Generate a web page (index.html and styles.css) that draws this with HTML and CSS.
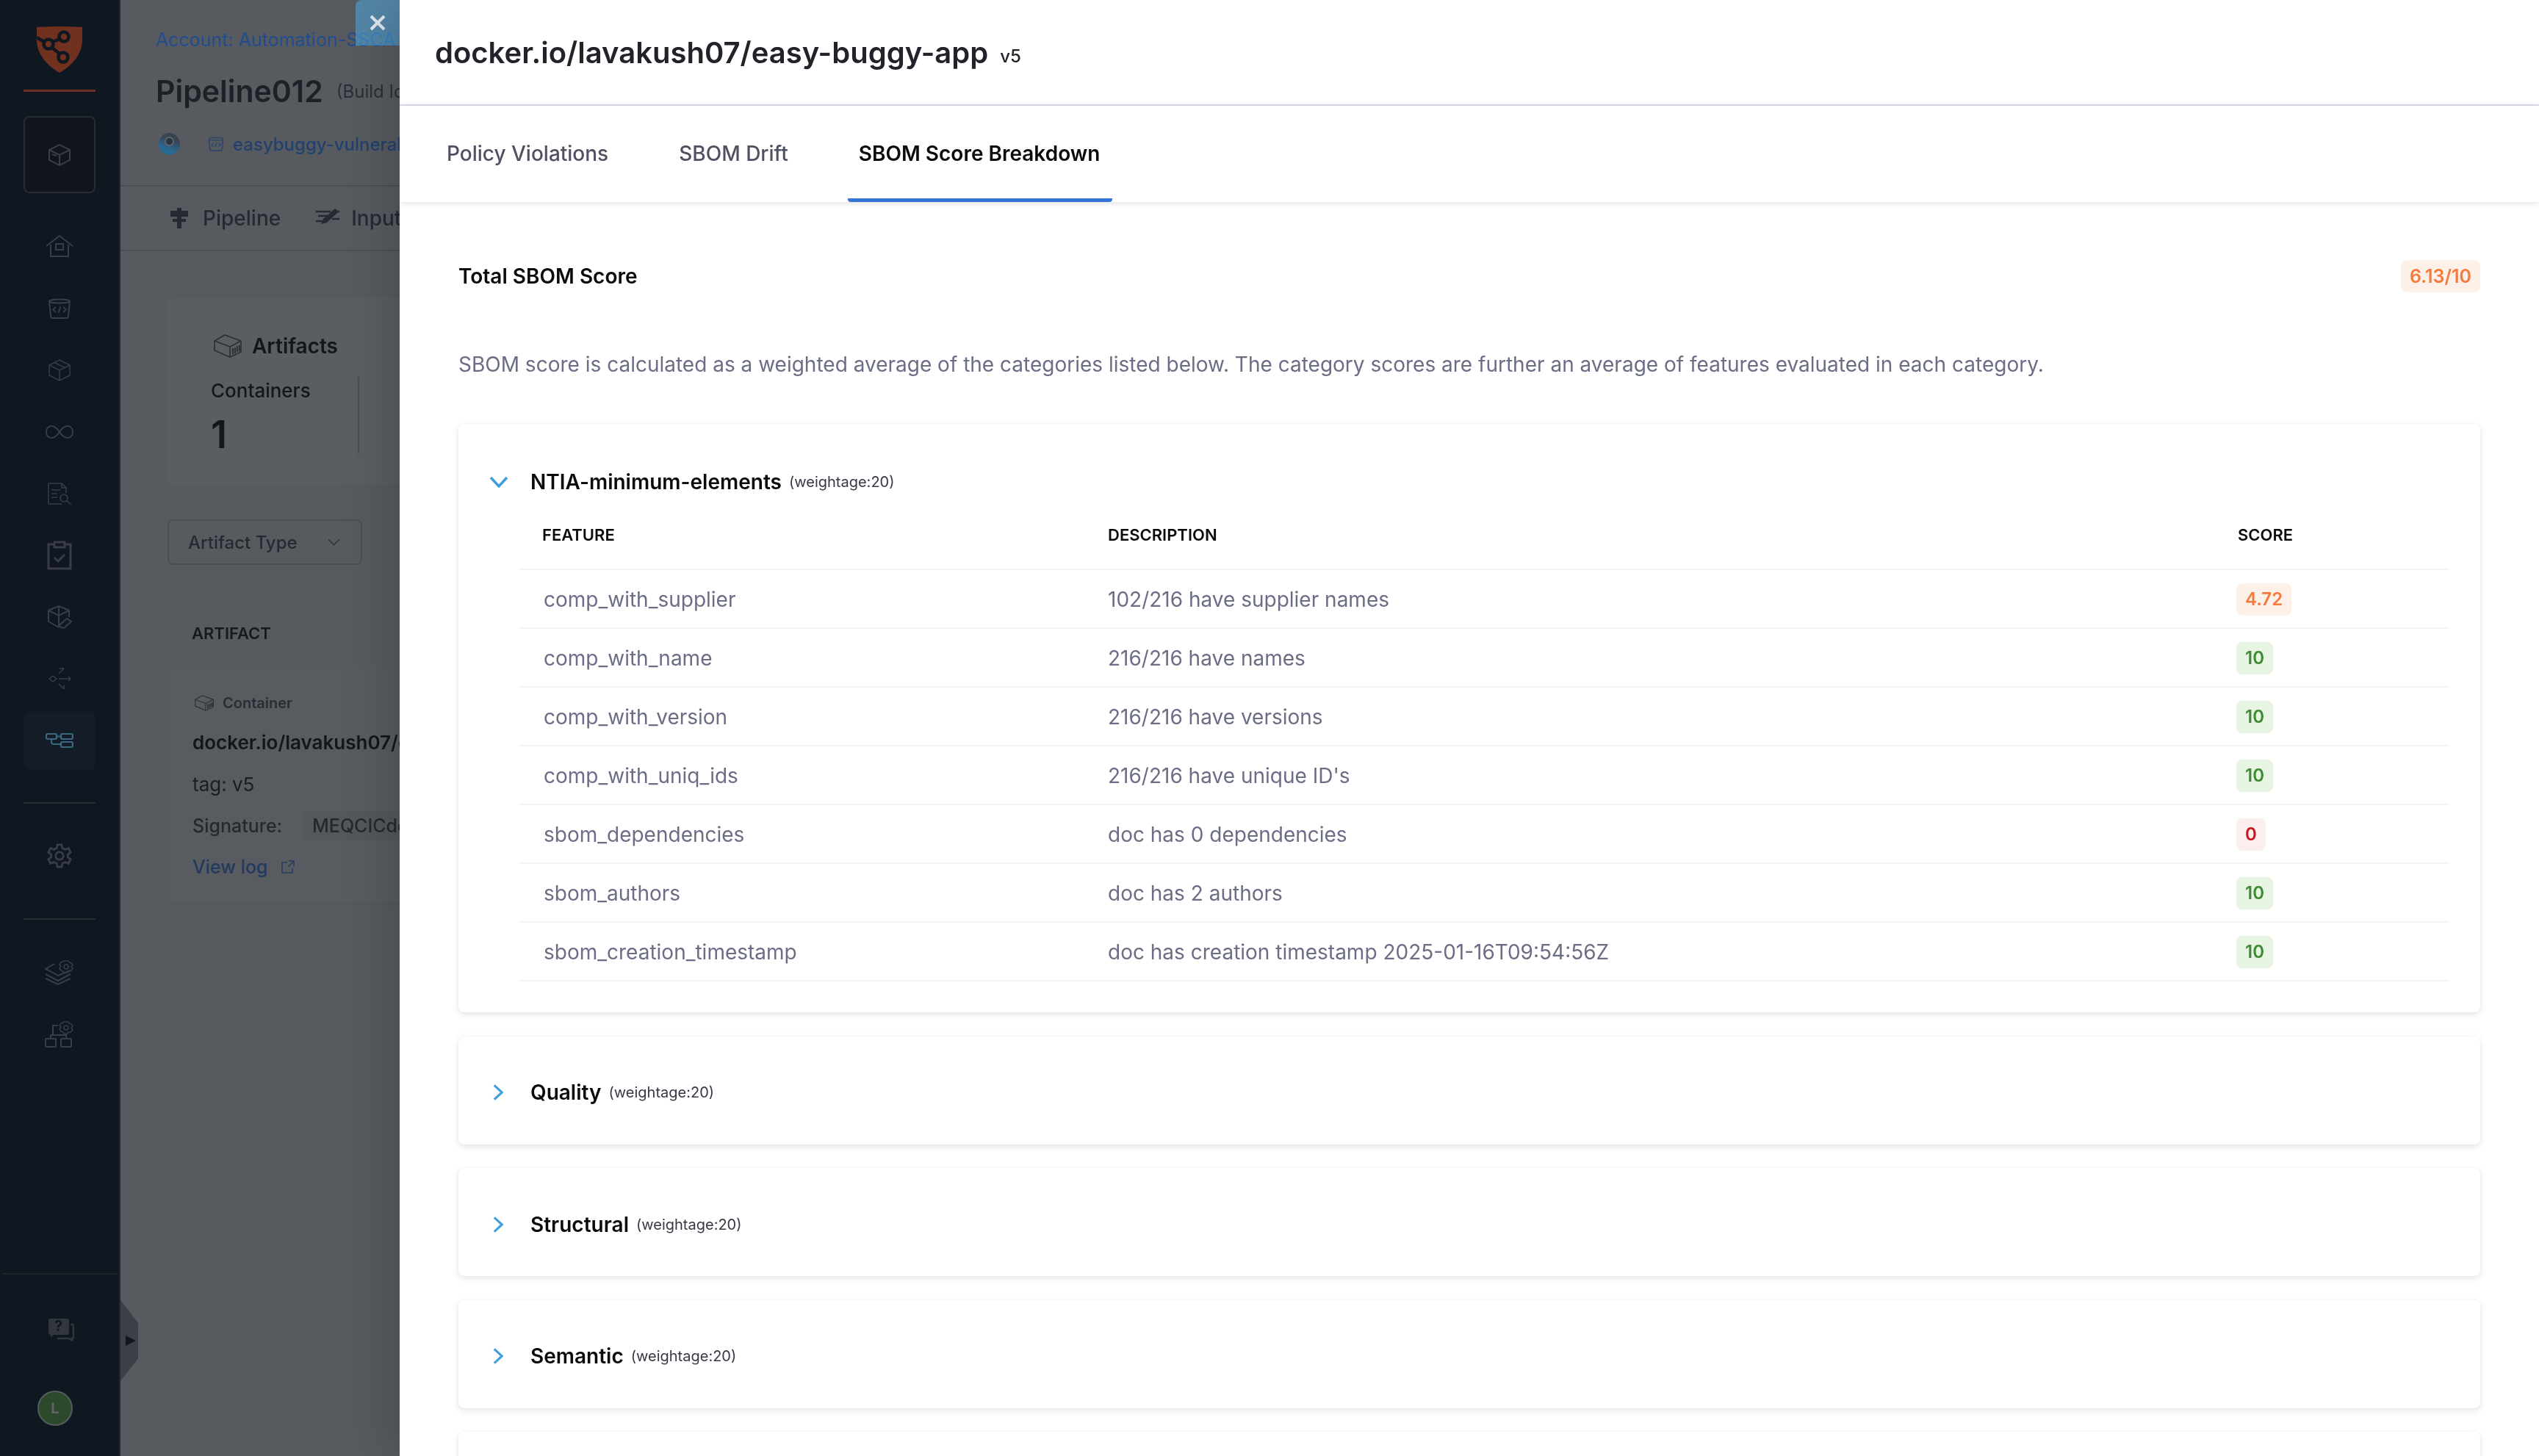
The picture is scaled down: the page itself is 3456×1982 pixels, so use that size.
FILE: index.html
```html
<!DOCTYPE html>
<html lang="en">
<head>
<meta charset="utf-8">
<title>SBOM Score Breakdown</title>
<link rel="stylesheet" href="styles.css">
</head>
<body>
<svg class="defs" width="0" height="0" aria-hidden="true">
  <symbol id="container" viewBox="0 0 38 32">
    <path d="M1 9 15 1l22 8v15l-15 7L1 22z" fill="none" stroke="currentColor" stroke-width="1.6"/>
    <path d="M1 9l21 8 15-8M22 17v14" fill="none" stroke="currentColor" stroke-width="1.6"/>
    <path d="M26 19v8M29 18v8M32 16v8M35 15v8" stroke="currentColor" stroke-width="2"/>
  </symbol>
  <symbol id="bucket" viewBox="0 0 32 28">
    <ellipse cx="16" cy="4" rx="14" ry="2.6" fill="none" stroke="currentColor" stroke-width="2"/>
    <path d="M2 4l2 20q0 3 3 3h18q3 0 3-3l2-20" fill="none" stroke="currentColor" stroke-width="2"/>
    <path d="M11 12l-4 3.500 4 3.500M21 12l4 3.500-4 3.500M17.500 11l-3 9" fill="none" stroke="currentColor" stroke-width="1.800"/>
  </symbol>
</svg>

<div class="page">
  <aside class="sidebar">
    <div class="logo-wrap">
      <svg class="logo" viewBox="0 0 62 63">
        <path d="M0 1Q31-1 62 1V18C62 40 45 55 31 63 17 55 0 40 0 18Z" fill="#70321f"/>
        <g fill="none" stroke="#0f1721" stroke-width="4.500">
          <circle cx="37" cy="14" r="6.500"/>
          <circle cx="16" cy="24" r="6.500"/>
          <circle cx="36" cy="42" r="6.500"/>
          <path d="M0 15 10 21M22 21l9-4M21 29l10 8"/>
        </g>
      </svg>
    </div>
    <div class="module-box">
      <svg class="ico-32" viewBox="0 0 32 32"><path d="M16 2 30 9v14l-14 7-14-7V9zM2 9l14 7 14-7M16 16v14M6 15l6 2" class="s"/></svg>
    </div>
    <nav class="nav">
      <div class="nav-item"><svg class="ico-38" viewBox="0 0 38 32"><path d="M1 15 19 1l18 14M7 13v16h24V13M14 12h10v8H14z" class="s"/></svg></div>
      <div class="nav-item"><svg class="ico-32 tone"><use href="#bucket"/></svg></div>
      <div class="nav-item"><svg class="ico-32" viewBox="0 0 32 32"><path d="M16 2 30 9v14l-14 7-14-7V9zM2 9l14 7 14-7M16 16v14M9 5.500l14 7" class="s thin"/></svg></div>
      <div class="nav-item"><svg class="ico-38" viewBox="0 0 38 18"><path d="M19 9C15 3 11 1 8 1 4 1 1 4 1 9s3 8 7 8c3 0 7-2 11-8 4-6 8-8 11-8 4 0 7 3 7 8s-3 8-7 8c-3 0-7-2-11-8z" class="s"/></svg></div>
      <div class="nav-item"><svg class="ico-34" viewBox="0 0 34 32"><path d="M20 30H2V2h18l6 6v7M20 2v6h6M6 11h12M6 16h8M6 21h8" class="s thin"/><circle cx="23" cy="22" r="5" class="s thin"/><path d="M27 26l6 5" class="s thin"/></svg></div>
      <div class="nav-item"><svg class="ico-34 clip" viewBox="0 0 34 40"><path d="M10 5H2v33h30V5h-8M10 2h14v7H10zM10 23l5 5 9-9" class="s bold"/></svg></div>
      <div class="nav-item"><svg class="ico-34" viewBox="0 0 34 34"><path d="M16 2 30 8v9M16 2 2 8v15l14 8M2 8l14 7 14-7M16 15v16M16 2v13" class="s"/><path d="M18 27l9-8 6 4-9 8q-3 2-6-1t0-3z" class="s"/></svg></div>
      <div class="nav-item"><svg class="ico-32" viewBox="0 0 32 32"><path d="M7 12l5 4-5 4-5-4zM15 9l7-7M22 2h-6M15 16h16M31 16l-3-3M31 16l-3 3M15 23l7 7M22 30v-5" class="s thin"/></svg></div>
      <div class="nav-item"><div class="nav-active"><svg class="ico-38 active-ico" viewBox="0 0 38 20"><rect x="1" y="1" width="14" height="7" rx="2" class="s"/><rect x="21" y="1" width="16" height="7" rx="2" class="s"/><rect x="21" y="12" width="16" height="7" rx="2" class="s"/><path d="M15 4.500h6M8 8v4q0 3 3 3h10" class="s"/></svg></div></div>
    </nav>
    <div class="side-rule first"></div>
    <div class="gear-item">
      <svg class="ico-34" viewBox="0 0 34 36"><path d="M14 2h6l1 5 4 2 5-2 3 6-4 3v4l4 3-3 6-5-2-4 2-1 5h-6l-1-5-4-2-5 2-3-6 4-3v-4L1 13l3-6 5 2 4-2z" class="s bold"/><circle cx="17" cy="18" r="5.500" class="s bold"/></svg>
    </div>
    <div class="side-rule"></div>
    <div class="admin-item one">
      <svg class="ico-40" viewBox="0 0 40 34"><path d="M13 5 1 12l17 9 17-7M1 19l17 9 17-9M1 25l17 8 17-8" class="s"/><path d="M26 1h6l1 2 3 1 2 3-2 2 2 3-3 3-3 0-1 2h-5l-1-2-3-1-2-3 2-3-2-2 2-3 3-1z" class="s thin"/><circle cx="29" cy="9" r="3" class="s thin"/></svg>
    </div>
    <div class="admin-item">
      <svg class="ico-40" viewBox="0 0 40 36"><rect x="1" y="24" width="14" height="11" rx="1" class="s"/><rect x="22" y="24" width="14" height="11" rx="1" class="s"/><path d="M8 24v-5h21v5M11 19V6h7" class="s"/><path d="M26 1h6l1 2 3 1 2 3-2 2 2 3-3 3h-3l-1 2h-5l-1-2-3-1-2-3 2-3-2-2 2-3 3-1z" class="s thin"/><circle cx="29" cy="9" r="3" class="s thin"/></svg>
    </div>
    <div class="side-foot">
      <div class="help">
        <svg class="ico-help" viewBox="0 0 36 32"><path d="M3 1h23q3 0 3 3v16q0 3-3 3H8l-4 4v-4q-3 0-3-3V4q0-3 2-3z" fill="#33363f"/><path d="M31 9h2q2 0 2 2v15q0 2-2 2v3l-4-3H13" fill="none" stroke="#33363f" stroke-width="2.500"/></svg>
        <span class="help-q">?</span>
      </div>
      <div class="avatar">L</div>
    </div>
  </aside>

  <main class="main">
    <header class="run-head">
      <div class="crumb">Account: Automation-SSCA</div>
      <div class="run-title"><span class="run-name">Pipeline012</span><span class="run-id">(Build Id</span></div>
      <div class="run-meta">
        <span class="meta-disc"><span class="meta-hole"></span></span>
        <svg class="meta-bucket"><use href="#bucket"/></svg>
        <span class="meta-link">easybuggy-vulneral</span>
      </div>
    </header>
    <div class="run-tabs">
      <span class="run-tab">
        <svg class="ico-pipe" viewBox="0 0 24 28"><path d="M9 0h6v4h9v8H15v3h6v4h-6v9H9v-9H3v-4h6v-3H0V4h9z" fill="#262932"/></svg>
        Pipeline
      </span>
      <span class="run-tab">
        <svg class="ico-input" viewBox="0 0 32 26"><path d="M0 4h20M3 10h14M0 17h10M22 14h10M24 4h8" stroke="#262932" stroke-width="2.500" fill="none"/><path d="M26 0l5 4-16 15-8 2 3-7z" fill="#262932"/></svg>
        Input
      </span>
    </div>
    <section class="run-body">
      <div class="stat-card">
        <div class="stat-head"><svg class="stat-ico"><use href="#container"/></svg><span>Artifacts</span></div>
        <div class="stat-col">
          <div class="stat-label">Containers</div>
          <div class="stat-value">1</div>
        </div>
      </div>
      <div class="filter"><span>Artifact Type</span><svg class="filter-chev" viewBox="0 0 16 9"><path d="M1 1l7 7 7-7" fill="none" stroke="#32343c" stroke-width="1.500"/></svg></div>
      <div class="list-label">ARTIFACT</div>
      <div class="art-card">
        <div class="art-kind"><svg class="kind-ico"><use href="#container"/></svg><span>Container</span></div>
        <div class="art-name">docker.io/lavakush07/easy</div>
        <div class="art-tag">tag: v5</div>
        <div class="art-sig"><span class="sig-key">Signature:</span><span class="sig-val">MEQCICde</span></div>
        <div class="art-log"><span>View log</span><svg class="log-ico" viewBox="0 0 18 18"><path d="M8 3H1v14h14v-6M10 1h7v7M17 1l-8 8" fill="none" stroke="#243c5f" stroke-width="1.600"/></svg></div>
      </div>
    </section>
    <div class="handle"><span class="handle-tri"></span></div>
  </main>
</div>

<button class="close" aria-label="Close"><svg viewBox="0 0 22 22"><path d="M2 2l18 18M20 2 2 20" stroke="#dfe6ec" stroke-width="4"/></svg></button>

<aside class="drawer">
  <header class="drawer-head">
    <h1 class="drawer-title">docker.io/lavakush07/easy-buggy-app</h1>
    <span class="drawer-ver">v5</span>
  </header>
  <div class="tabs">
    <span class="tab">Policy Violations</span>
    <span class="tab">SBOM Drift</span>
    <span class="tab is-active">SBOM Score Breakdown</span>
  </div>
  <div class="drawer-body">
    <div class="total">
      <span class="total-label">Total SBOM Score</span>
      <span class="badge warn">6.13/10</span>
    </div>
    <p class="intro">SBOM score is calculated as a weighted average of the categories listed below. The category scores are further an average of features evaluated in each category.</p>

    <section class="acc open">
      <div class="acc-head">
        <svg class="chev down" viewBox="0 0 26 16"><path d="M2 2l11 12L24 2" /></svg>
        <span class="acc-name">NTIA-minimum-elements</span>
        <span class="acc-weight">(weightage:20)</span>
      </div>
      <div class="score-table">
        <div class="row head"><span>FEATURE</span><span>DESCRIPTION</span><span>SCORE</span></div>
        <div class="row"><span>comp_with_supplier</span><span>102/216 have supplier names</span><span><b class="badge warn">4.72</b></span></div>
        <div class="row"><span>comp_with_name</span><span>216/216 have names</span><span><b class="badge good">10</b></span></div>
        <div class="row"><span>comp_with_version</span><span>216/216 have versions</span><span><b class="badge good">10</b></span></div>
        <div class="row"><span>comp_with_uniq_ids</span><span>216/216 have unique ID's</span><span><b class="badge good">10</b></span></div>
        <div class="row"><span>sbom_dependencies</span><span>doc has 0 dependencies</span><span><b class="badge bad">0</b></span></div>
        <div class="row"><span>sbom_authors</span><span>doc has 2 authors</span><span><b class="badge good">10</b></span></div>
        <div class="row"><span>sbom_creation_timestamp</span><span>doc has creation timestamp 2025-01-16T09:54:56Z</span><span><b class="badge good">10</b></span></div>
      </div>
    </section>

    <section class="acc">
      <div class="acc-head">
        <svg class="chev" viewBox="0 0 16 26"><path d="M2 2l12 11L2 24"/></svg>
        <span class="acc-name">Quality</span><span class="acc-weight">(weightage:20)</span>
      </div>
    </section>
    <section class="acc">
      <div class="acc-head">
        <svg class="chev" viewBox="0 0 16 26"><path d="M2 2l12 11L2 24"/></svg>
        <span class="acc-name">Structural</span><span class="acc-weight">(weightage:20)</span>
      </div>
    </section>
    <section class="acc">
      <div class="acc-head">
        <svg class="chev" viewBox="0 0 16 26"><path d="M2 2l12 11L2 24"/></svg>
        <span class="acc-name">Semantic</span><span class="acc-weight">(weightage:20)</span>
      </div>
    </section>
    <section class="acc"></section>
  </div>
</aside>
</body>
</html>
```
FILE: styles.css
```css
* { box-sizing: border-box; }
html, body { margin: 0; height: 100%; overflow: hidden; }
body { font-family: Inter, "Noto Sans", sans-serif; background: #575a5f; color: #22222a; }
.defs { position: absolute; }

/* dimmed page behind the drawer */
.page { display: flex; height: 1982px; filter: blur(.7px); }
.sidebar { width: 164px; flex: none; background: #0f1721; display: flex; flex-direction: column; align-items: center; border-right: 2px solid #22272f; }
.logo-wrap { height: 125px; width: 98px; padding-top: 36px; border-bottom: 3px solid #6b2f25; display: flex; justify-content: center; }
.logo { width: 62px; height: 63px; }
.module-box { width: 98px; height: 105px; margin-top: 33px; border: 2px solid #2a2c35; border-radius: 8px; background: #11141d; display: flex; align-items: center; justify-content: center; }
.s { fill: none; stroke: #3a3d48; stroke-width: 2; }
.s.thin { stroke-width: 1.5; }
.s.bold { stroke-width: 3; }
.ico-32 { width: 32px; height: 32px; }
.ico-34 { width: 34px; height: 34px; }
.ico-38 { width: 38px; height: 32px; }
.ico-40 { width: 40px; height: 36px; }
.ico-help { width: 36px; height: 32px; display: block; }
.tone { color: #3a3d48; }
.clip { height: 40px; }
.nav { display: flex; flex-direction: column; margin-top: 31px; }
.nav-item { width: 98px; height: 84px; display: flex; align-items: center; justify-content: center; }
.nav-active { width: 98px; height: 79px; border-radius: 8px; background: #141c28; display: flex; align-items: center; justify-content: center; }
.active-ico { height: 22px; }
.active-ico .s { stroke: #376a80; stroke-width: 2.2; }
.side-rule { width: 98px; height: 2px; background: #292d36; }
.side-rule.first { margin-top: 42px; }
.gear-item { height: 156px; padding-bottom: 14px; display: flex; align-items: center; }
.admin-item { height: 84px; display: flex; align-items: center; }
.admin-item.one { margin-top: 30px; }
.side-foot { margin-top: auto; width: 156px; height: 249px; border-top: 2px solid #1f242d; display: flex; flex-direction: column; align-items: center; }
.help { position: relative; margin-top: 59px; margin-left: 4px; }
.help-q { position: absolute; left: 9px; top: -1px; font-size: 20px; font-weight: 700; color: #0f1721; }
.avatar { width: 48px; height: 48px; border-radius: 50%; margin-top: 67px; margin-right: 12px; background: #2c4a2b; border: 2px solid #575b5e; color: #5e6365; font-size: 20px; font-weight: 700; display: flex; align-items: center; justify-content: center; }

.main { flex: 1; position: relative; background: #575a5f; overflow: hidden; }
.run-head { height: 254px; padding: 36px 0 0 48px; border-bottom: 2px solid #4c4f55; }
.crumb { font-size: 25px; line-height: 36px; color: #1f4d8f; white-space: nowrap; }
.run-title { margin-top: 20px; display: flex; align-items: center; gap: 18px; height: 64px; white-space: nowrap; }
.run-name { font-size: 41px; font-weight: 600; color: #1d2027; }
.run-id { font-size: 24px; color: #2b2e36; }
.run-meta { margin-top: 22px; display: flex; align-items: center; height: 36px; }
.meta-disc { width: 29px; height: 30px; margin-left: 4px; border-radius: 50%; background: linear-gradient(200deg, #3a4350 30%, #2a6a92 70%); position: relative; display: block; }
.meta-hole { position: absolute; left: 8px; top: 5px; width: 13px; height: 13px; border-radius: 50%; background: #2a3440; border: 2px solid #5d6670; }
.meta-bucket { width: 22px; height: 20px; margin-left: 38px; color: #2a4468; }
.meta-link { margin-left: 12px; font-size: 24px; font-weight: 500; color: #22416f; white-space: nowrap; }
.run-tabs { height: 88px; padding-left: 68px; border-bottom: 2px solid #4c4f55; display: flex; align-items: center; gap: 48px; }
.run-tab { display: flex; align-items: center; gap: 20px; font-size: 28px; font-weight: 500; color: #262932; white-space: nowrap; }
.ico-pipe { width: 24px; height: 28px; }
.ico-input { width: 32px; height: 26px; margin-right: -4px; }
.run-body { padding: 64px 0 0 64px; }
.stat-card { width: 900px; height: 253px; background: #5a5d62; border-radius: 8px; padding: 48px 0 0 59px; }
.stat-head { display: flex; align-items: center; gap: 14px; height: 34px; font-size: 28px; font-weight: 600; color: #14161a; margin-left: 4px; }
.stat-ico { width: 38px; height: 32px; color: #2c2f36; }
.stat-col { margin-top: 25px; height: 104px; width: 202px; padding-top: 4px; border-right: 2px solid #4a4d52; }
.stat-label { font-size: 26px; font-weight: 500; line-height: 30px; color: #14161b; }
.stat-value { margin-top: 17px; font-size: 52px; line-height: 56px; font-weight: 600; color: #14161b; }
.filter { width: 265px; height: 62px; margin-top: 48px; border: 2px solid #4a4d53; border-radius: 8px; padding: 0 26px; display: flex; align-items: center; justify-content: space-between; font-size: 24px; color: #262931; font-weight: 500; }
.filter-chev { width: 17px; height: 10px; margin-right: 2px; }
.list-label { margin: 78px 0 0 33px; font-size: 22px; line-height: 30px; font-weight: 600; color: #17191e; }
.art-card { width: 900px; height: 323px; margin-top: 30px; background: #585b60; border-radius: 8px; box-shadow: 0 1px 2px #505358; padding: 36px 0 0 34px; }
.art-kind { display: flex; align-items: center; gap: 12px; height: 28px; margin-left: 3px; font-size: 20px; font-weight: 600; color: #2a2d34; }
.kind-ico { width: 26px; height: 22px; color: #2b2e35; }
.art-name { margin-top: 22px; font-size: 26px; font-weight: 600; line-height: 36px; color: #14161b; white-space: nowrap; }
.art-tag { margin-top: 22px; font-size: 26px; line-height: 34px; color: #1a1d22; }
.art-sig { margin-top: 22px; height: 34px; display: flex; align-items: center; font-size: 25px; font-weight: 500; color: #25282f; white-space: nowrap; }
.sig-key { width: 150px; }
.sig-val { width: 400px; padding-left: 13px; background: #54575c; height: 40px; line-height: 40px; border-radius: 6px; }
.art-log { margin-top: 24px; display: flex; align-items: center; gap: 18px; font-size: 25px; font-weight: 500; color: #213a5e; }
.log-ico { width: 18px; height: 18px; }
.handle { position: absolute; left: 0; top: 1770px; width: 24px; height: 110px; background: #3c3f48; clip-path: polygon(0 0, 100% 28%, 100% 72%, 0 100%); display: flex; align-items: center; padding-left: 7px; }
.handle-tri { width: 0; height: 0; border-left: 14px solid #0f1721; border-top: 7px solid transparent; border-bottom: 7px solid transparent; }

/* close tab */
.close { position: fixed; left: 484px; top: 0; width: 60px; height: 62px; padding: 0; border: 0; border-top-left-radius: 8px; background: rgba(80, 170, 225, .55); display: flex; align-items: center; justify-content: center; }
.close svg { width: 22px; height: 22px; }

/* drawer */
.drawer { position: fixed; left: 544px; top: 0; right: 0; height: 1982px; background: #fff; overflow: hidden; box-shadow: -14px 0 60px rgba(0, 0, 0, .16); display: flex; flex-direction: column; }
.drawer-head { flex: none; height: 144px; padding: 2px 0 0 48px; border-bottom: 2px solid #d9dae5; display: flex; align-items: center; gap: 16px; }
.drawer-title { margin: 0; font-size: 40px; line-height: 52px; font-weight: 600; color: #22222a; white-space: nowrap; }
.drawer-ver { margin-top: 10px; font-size: 24px; line-height: 32px; font-weight: 500; color: #22222a; }
.tabs { flex: none; height: 131px; padding-left: 49px; display: flex; gap: 66px; box-shadow: 0 2px 8px rgba(96, 97, 112, .18); position: relative; }
.tab { padding: 0 15px; font-size: 28px; line-height: 130px; font-weight: 500; color: #4f5162; border-bottom: 5px solid transparent; white-space: nowrap; }
.tab.is-active { padding-right: 17px; font-weight: 600; color: #0b0b0d; border-bottom-color: #3575d6; border-radius: 0 0 4px 4px; }
.drawer-body { padding: 79px 80px 0; flex: 1; }
.total { display: flex; align-items: center; justify-content: space-between; height: 44px; }
.total-label { font-size: 28px; font-weight: 600; color: #0b0b0d; }
.badge { display: inline-block; height: 44px; line-height: 44px; padding: 0 12px; border-radius: 8px; font-size: 24px; font-weight: 600; }
.total .badge { font-size: 25px; }
.badge.warn { background: #fcf1e8; color: #f57a3c; }
.badge.good { background: #e8f5e3; color: #3f8a35; }
.badge.bad { background: #fdeeee; color: #c8161d; }
.intro { margin: 76px 0 59px; font-size: 28px; line-height: 44px; color: #6b6d85; white-space: nowrap; }
.acc { height: 147px; margin-bottom: 32.5px; background: #fff; border-radius: 8px; box-shadow: 0 3px 8px rgba(96, 97, 112, .17), 0 0 2px rgba(40, 41, 61, .05); }
.acc.open { height: 801px; padding: 50px 42px 0 42px; }
.acc-head { height: 147px; padding: 6px 0 0 47px; display: flex; align-items: center; }
.acc.open .acc-head { height: 58px; padding: 0; }
.acc-name { margin-left: 37px; font-size: 28px; font-weight: 600; color: #0b0b0d; }
.acc-weight { margin-left: 10px; font-size: 20px; color: #383946; }
.chev { width: 14px; height: 24px; fill: none; }
.chev path { fill: none; stroke: #3f9fdc; stroke-width: 3.5; }
.chev.down { width: 26px; height: 16px; }
.acc.open .acc-name { margin-left: 30px; }
.score-table { margin-left: 40px; }
.row { display: grid; grid-template-columns: 768px 1536px 1fr; height: 80px; padding-top: 2px; align-items: center; border-bottom: 2px solid #f3f3fa; font-size: 28px; color: #6b6d85; }
.row > span { padding-left: 34px; white-space: nowrap; }
.row.head { height: 91px; padding: 0 0 3px; font-size: 22px; font-weight: 600; color: #0b0b0d; }
.row.head > span:first-child { padding-left: 32px; }
.row.head > span:last-child { padding-left: 36px; }
```
